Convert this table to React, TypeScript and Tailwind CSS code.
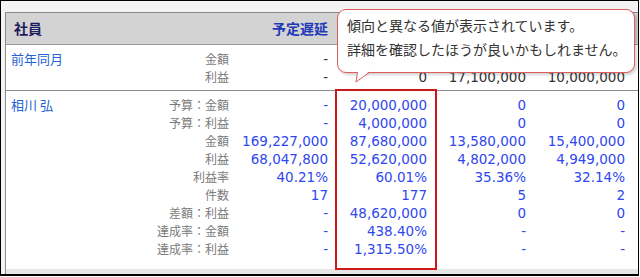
import React from "react"

type Row = {
  label: string
  values: string[]
}

type Section = {
  name: string
  muted?: boolean
  rows: Row[]
}

// row 1 of 前年同月 sits under the tooltip, so its other cells stay blank
const sections: Section[] = [
  {
    name: "前年同月",
    muted: true,
    rows: [
      { label: "金額", values: ["-", "", "", ""] },
      { label: "利益", values: ["-", "0", "17,100,000", "10,000,000"] },
    ],
  },
  {
    name: "相川 弘",
    rows: [
      { label: "予算：金額", values: ["-", "20,000,000", "0", "0"] },
      { label: "予算：利益", values: ["-", "4,000,000", "0", "0"] },
      { label: "金額", values: ["169,227,000", "87,680,000", "13,580,000", "15,400,000"] },
      { label: "利益", values: ["68,047,800", "52,620,000", "4,802,000", "4,949,000"] },
      { label: "利益率", values: ["40.21%", "60.01%", "35.36%", "32.14%"] },
      { label: "件数", values: ["17", "177", "5", "2"] },
      { label: "差額：利益", values: ["-", "48,620,000", "0", "0"] },
      { label: "達成率：金額", values: ["-", "438.40%", "-", "-"] },
      { label: "達成率：利益", values: ["-", "1,315.50%", "-", "-"] },
    ],
  },
]

const gridCols = "grid grid-cols-[90px_141px_99px_99px_99px_99px]"

const SectionBlock = ({ section, last }: { section: Section; last: boolean }) => {
  return (
    <div className={`pt-[5px] pb-[4px] ${last ? "" : "border-b border-[#8c8c8c]"}`}>
      {section.rows.map((row, i) => (
        <div key={row.label} className={`${gridCols} h-[18px] leading-[18px]`}>
          <div className="pl-[5px] text-[13px] text-[#2462d8] font-['Noto_Sans_CJK_JP',sans-serif]">
            {i === 0 ? section.name : ""}
          </div>
          <div className="pr-2 text-right text-[12px] text-[#7b7b7b] font-['Noto_Sans_CJK_JP',sans-serif]">
            {row.label}
          </div>
          {row.values.map((v, j) => (
            <div
              key={j}
              className={`pr-2 text-right text-[13.5px] font-['DejaVu_Sans','Noto_Sans_CJK_JP',sans-serif] ${
                section.muted ? "text-[#333333]" : "text-[#2f47f0]"
              }`}
            >
              {v}
            </div>
          ))}
        </div>
      ))}
    </div>
  )
}

const Tooltip = () => {
  return (
    <>
      <div className="absolute left-[337px] top-[9px] w-[298px] h-[64px] rounded-[9px] border border-[#df5c5c] bg-white pl-[9px] pt-[3px] shadow-[2px_2px_3px_rgba(0,0,0,0.18)] font-['Noto_Sans_CJK_JP',sans-serif] text-[14px] leading-[24px] text-[#333333]">
        <p>傾向と異なる値が表示されています。</p>
        <p>詳細を確認したほうが良いかもしれません。</p>
      </div>
      <svg
        className="absolute left-[355px] top-[71px]"
        width="17"
        height="13"
        viewBox="0 0 17 13"
      >
        <polygon points="2.5,0 14.5,0 1,11" fill="#ffffff" />
        <polyline
          points="2.5,1 1,11 15,1"
          fill="none"
          stroke="#df5c5c"
          strokeWidth="1"
        />
      </svg>
    </>
  )
}

const App = () => {
  return (
    <div className="relative w-[640px] h-[277px] overflow-hidden bg-white">
      <div className="w-[639px] h-[276px] border border-b-2 border-black bg-[#f3f3f3] pl-1 pt-[11px] flex flex-col">
        <div className="flex-1 flex flex-col overflow-hidden border-l border-t border-[#8a8a8a] bg-white">
          <div className={`${gridCols} h-[32px] border-b border-[#9a9a9a] bg-[#d3d3d3] items-center font-bold text-[14px] font-['Noto_Sans_CJK_JP',sans-serif]`}>
            <div className="col-span-2 pl-2 text-[#1c1c5e]">社員</div>
            <div className="pr-2 text-right text-[#1f3ab8]">予定遅延</div>
            <div />
            <div />
            <div />
          </div>
          {sections.map((s, i) => (
            <SectionBlock key={s.name} section={s} last={i === sections.length - 1} />
          ))}
          <div className="flex-1" />
          <div className="h-[5px] bg-[#e6e6e6]" />
        </div>
      </div>
      <div className="absolute left-[335px] top-[89px] w-[102px] h-[181px] border-2 border-[#cc1818]" />
      <Tooltip />
    </div>
  )
}

export default App
